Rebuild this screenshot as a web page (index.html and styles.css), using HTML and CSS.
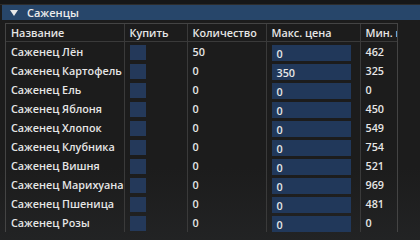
FILE: index.html
```html
<!DOCTYPE html>
<html>
<head>
    <meta name="viewport" content="width=device-width, initial-scale=1.0">
    <title>Саженцы</title>
    <link rel="stylesheet" href="styles.css">
</head>
<body>
    <div class="window">
        <div class="topbar"></div>
        <div class="section-header">
            <svg class="arrow" width="8" height="6" viewBox="0 0 8 6"><polygon points="0,0 8,0 4,6" fill="#e8e8e8"/></svg>
            <span>Саженцы</span>
        </div>

        <div class="table-container">
            <table class="seed-table">
                <colgroup>
                    <col class="c-name">
                    <col class="c-buy">
                    <col class="c-qty">
                    <col class="c-max">
                    <col class="c-min">
                </colgroup>
                <thead>
                    <tr>
                        <th>Название</th>
                        <th>Купить</th>
                        <th>Количество</th>
                        <th>Макс. цена</th>
                        <th>Мин. цена</th>
                    </tr>
                </thead>
                <tbody>
                    <tr><td>Саженец Лён</td><td><div class="check"></div></td><td>50</td><td><div class="field">0</div></td><td>462</td></tr>
                    <tr><td>Саженец Картофель</td><td><div class="check"></div></td><td>0</td><td><div class="field">350</div></td><td>325</td></tr>
                    <tr><td>Саженец Ель</td><td><div class="check"></div></td><td>0</td><td><div class="field">0</div></td><td>0</td></tr>
                    <tr><td>Саженец Яблоня</td><td><div class="check"></div></td><td>0</td><td><div class="field">0</div></td><td>450</td></tr>
                    <tr><td>Саженец Хлопок</td><td><div class="check"></div></td><td>0</td><td><div class="field">0</div></td><td>549</td></tr>
                    <tr><td>Саженец Клубника</td><td><div class="check"></div></td><td>0</td><td><div class="field">0</div></td><td>754</td></tr>
                    <tr><td>Саженец Вишня</td><td><div class="check"></div></td><td>0</td><td><div class="field">0</div></td><td>521</td></tr>
                    <tr><td>Саженец Марихуана</td><td><div class="check"></div></td><td>0</td><td><div class="field">0</div></td><td>969</td></tr>
                    <tr><td>Саженец Пшеница</td><td><div class="check"></div></td><td>0</td><td><div class="field">0</div></td><td>481</td></tr>
                    <tr><td>Саженец Розы</td><td><div class="check"></div></td><td>0</td><td><div class="field">0</div></td><td>0</td></tr>
                </tbody>
            </table>
        </div>
    </div>
</body>
</html>
```

FILE: styles.css
```css
* {
    box-sizing: border-box;
    margin: 0;
    padding: 0;
}

body {
    width: 420px;
    height: 240px;
    overflow: hidden;
    font-family: "Open Sans", "DejaVu Sans", sans-serif;
    font-size: 10.8px;
    font-weight: 600;
    color: #e6e6e6;
    background: linear-gradient(to bottom, #1c1c1c 0%, #1c1c1c 70%, #222324 100%);
}

.window {
    display: flex;
    flex-direction: column;
    height: 240px;
}

.topbar {
    height: 5px;
    background-color: #161718;
    border-bottom: 1px solid #2c2c2c;
}

.section-header {
    display: flex;
    align-items: center;
    gap: 9px;
    height: 15px;
    margin: 0 0 3px 2px;
    padding-left: 8px;
    background-color: #27466a;
    font-size: 11px;
    color: #ececec;
}

.arrow {
    display: block;
}

.table-container {
    margin-left: 5px;
    width: 393px;
    overflow: hidden;
    border: 1px solid #444;
    border-bottom: none;
}

.seed-table {
    width: 393px;
    table-layout: fixed;
    border-collapse: collapse;
}

.c-name { width: 118px; }
.c-buy { width: 63px; }
.c-qty { width: 79px; }
.c-max { width: 94px; }
.c-min { width: 39px; }

th, td {
    text-align: left;
    white-space: nowrap;
    overflow: hidden;
    padding: 0 0 0 5px;
    border-left: 1px solid #3a3a3a;
}

th:first-child, td:first-child {
    border-left: none;
}

th {
    height: 17px;
    border-bottom: 1px solid #3a3a3a;
    font-weight: 600;
}

td {
    height: 19px;
    vertical-align: middle;
}

.check {
    width: 16px;
    height: 15px;
    margin-top: 3px;
    background-color: #24395a;
}

.field {
    width: 79px;
    height: 16px;
    margin-top: 3px;
    padding: 2px 0 0 5px;
    line-height: 13px;
    background-color: #21385a;
}
```
